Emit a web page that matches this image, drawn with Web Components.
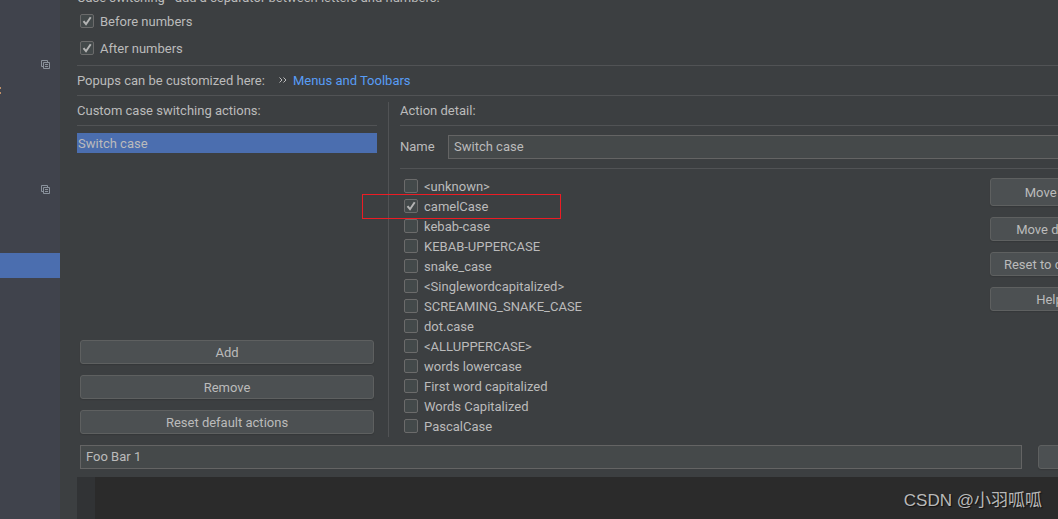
<!DOCTYPE html>
<html lang="en">
<head>
<meta charset="utf-8">
<title>Case switching settings</title>
<style>
html, body { height: 100%; }
body { margin: 0; background: #3c3f41; color: #bbbbbb; font: 13px/20px Roboto, "Noto Sans CJK SC", sans-serif; overflow: hidden; }
</style>
</head>
<body>
<settings-window></settings-window>
<script>
function define(name, html, setup) {
  const template = document.createElement('template');
  template.innerHTML = html;
  customElements.define(name, class extends HTMLElement {
    constructor() {
      super();
      this.attachShadow({ mode: 'open' }).append(template.content.cloneNode(true));
    }
    connectedCallback() {
      if (setup) setup(this, this.shadowRoot);
    }
  });
}

define('nav-row', `
<style>
:host { display: flex; align-items: center; justify-content: space-between; height: 25px; box-sizing: border-box; padding: 0 10px 2px 0; }
:host([selected]) { background: #4b6eaf; }
svg { display: none; }
:host([project]) .copy, :host([mark]) .mark { display: block; }
.copy { margin-left: auto; }
</style>
<svg class="mark" width="2" height="11" fill="#c09068" aria-hidden="true"><path d="M0 3h1v2H0zM0 8h1v2H0z"/></svg>
<svg class="copy" width="9" height="9" viewBox="0 0 9 9" fill="none" stroke="#8a929c" aria-hidden="true"><path d="M2 6.500H.5v-6h6V2M2.500 2.500h6v6h-6zM4 4.500h3M4 6.500h3"/></svg>`);

define('nav-tree', `
<style>:host { display: block; background: #40434c; padding-top: 3px; overflow: hidden; }</style>
<slot></slot>`);

define('check-box', `
<style>
:host { display: flex; align-items: center; height: var(--row, 20px); }
label { display: flex; align-items: center; gap: 6px; white-space: pre; }
input { appearance: none; box-sizing: border-box; width: 14px; height: 14px; margin: 0; border: 1px solid #6b6b6b; border-radius: 2px; background: #43494a; }
.box { display: grid; }
.text { padding-top: 2px; }
input, svg { grid-area: 1 / 1; }
svg { display: none; pointer-events: none; }
input:checked + svg { display: block; z-index: 1; }
</style>
<label><span class="box"><input type="checkbox"><svg width="14" height="14" viewBox="0 0 14 14" fill="none" stroke="#b4b4b4" stroke-width="2" aria-hidden="true"><path d="M3.500 7.200 6 10.200 10.700 3.300"/></svg></span><span class="text"><slot></slot></span></label>`,
(host, root) => { root.querySelector('input').checked = host.hasAttribute('checked'); });

define('push-button', `
<style>
:host { display: block; }
button { display: block; width: 100%; height: var(--height, 24px); box-sizing: border-box; padding: 2px 0 0; border: 1px solid #5e6060; border-radius: 3px; background: #4c5052; color: inherit; font: inherit; box-shadow: 0 1px 1px #35383a; white-space: nowrap; }
</style>
<button type="button"><slot></slot></button>`);

define('text-field', `
<style>
:host { display: block; }
label { display: flex; align-items: center; gap: 12px; }
label span { min-width: 36px; }
label span:empty { display: none; }
input { flex: 1; min-width: 0; height: 24px; box-sizing: border-box; margin: 0; padding: 0 5px 2px; border: 1px solid #646464; border-radius: 0; background: #45494a; color: inherit; font: inherit; outline: 0; }
</style>
<label><span></span><input type="text"></label>`,
(host, root) => {
  const input = root.querySelector('input');
  input.value = host.getAttribute('value');
  if (host.hasAttribute('label')) root.querySelector('span').textContent = host.getAttribute('label');
  else input.setAttribute('aria-label', host.getAttribute('name'));
});

define('rule-line', `<style>:host { display: block; height: 1px; background: #515355; }</style>`);

define('actions-pane', `
<style>
:host { display: flex; flex-direction: column; width: 300px; flex: none; }
header { height: 18px; line-height: 18px; margin-bottom: 5px; }
ul { list-style: none; margin: 7px 0 auto; padding: 0; }
li { background: #4b6eaf; padding-left: 1px; height: 20px; line-height: 22px; }
.buttons { display: grid; gap: 11px; padding: 0 3px 3px; }
</style>
<header>Custom case switching actions:</header>
<rule-line></rule-line>
<ul><li>Switch case</li></ul>
<div class="buttons">
<push-button>Add</push-button>
<push-button>Remove</push-button>
<push-button>Reset default actions</push-button>
</div>`);

define('highlight-frame', `<style>:host { position: absolute; inset: -2px auto auto -42px; width: 199px; height: 25px; box-sizing: border-box; border: 1px solid #ed1c24; pointer-events: none; z-index: 2; }</style>`);

define('detail-pane', `
<style>
:host { display: block; flex: 1; min-width: 0; }
header { height: 18px; line-height: 18px; margin-bottom: 5px; }
text-field { margin: 9px 0; }
.body { display: flex; justify-content: space-between; padding: 7px 3px 0 4px; }
.order { display: grid; align-content: start; gap: 11px; width: 119px; padding-top: 2px; }
.order push-button:first-child { --height: 28px; }
.marked { position: relative; }
</style>
<header>Action detail:</header>
<rule-line></rule-line>
<text-field label="Name" value="Switch case"></text-field>
<rule-line></rule-line>
<div class="body">
<div class="styles">
<check-box>&lt;unknown&gt;</check-box>
<div class="marked"><check-box checked>camelCase</check-box><highlight-frame></highlight-frame></div>
<check-box>kebab-case</check-box>
<check-box>KEBAB-UPPERCASE</check-box>
<check-box>snake_case</check-box>
<check-box>&lt;Singlewordcapitalized&gt;</check-box>
<check-box>SCREAMING_SNAKE_CASE</check-box>
<check-box>dot.case</check-box>
<check-box>&lt;ALLUPPERCASE&gt;</check-box>
<check-box>words lowercase</check-box>
<check-box>First word capitalized</check-box>
<check-box>Words Capitalized</check-box>
<check-box>PascalCase</check-box>
</div>
<div class="order">
<push-button>Move up</push-button>
<push-button>Move down</push-button>
<push-button>Reset to default</push-button>
<push-button>Help</push-button>
</div>
</div>`);

define('preview-editor', `
<style>
:host { display: flex; flex: 1; background: #2b2b2b; }
.gutter { width: 18px; background: #313335; }
</style>
<div class="gutter"></div>`);

define('water-mark', `<style>:host { position: absolute; right: 16px; bottom: 6px; font: 17px/24px "Liberation Sans", "Noto Sans CJK SC", sans-serif; color: #b9b9b9; text-shadow: 1px 1px 1px #111; white-space: nowrap; }</style><slot></slot>`);

define('settings-window', `
<style>
:host { display: grid; grid-template-columns: 60px minmax(0, 1fr); height: 100%; position: relative; overflow: hidden; }
main { display: flex; flex-direction: column; box-sizing: border-box; width: calc(100% + 54px); padding-left: 17px; margin-top: -12px; }
.intro { height: 19px; }
.numbers { --row: 27px; padding: 0 0 4px 3px; }
.popups { display: flex; height: 29px; align-items: center; }
.popups svg { margin: 0 6px 2px 14px; }
a { color: #589df6; text-decoration: none; }
.split { display: flex; gap: 11px; margin-top: 6px; height: 335px; }
.divider { width: 1px; background: #515355; }
.sample { display: flex; gap: 16px; padding: 8px 3px 8px; }
.sample text-field { flex: 1; }
.sample push-button { width: 71px; }
</style>
<nav-tree>
<nav-row></nav-row><nav-row></nav-row><nav-row project></nav-row><nav-row mark></nav-row><nav-row></nav-row>
<nav-row></nav-row><nav-row></nav-row><nav-row project></nav-row><nav-row></nav-row><nav-row></nav-row><nav-row selected></nav-row>
</nav-tree>
<main>
<div class="intro">Case switching - add a separator between letters and numbers:</div>
<div class="numbers">
<check-box checked>Before numbers</check-box>
<check-box checked>After numbers</check-box>
</div>
<rule-line></rule-line>
<div class="popups"><span>Popups can be customized here:</span><svg width="8" height="6" viewBox="0 0 8 6" fill="none" stroke="#bbbbbb" aria-hidden="true"><path d="M.5.500 3 3 .5 5.500M4.500.500 7 3 4.500 5.500"/></svg><a href="#menus">Menus and Toolbars</a></div>
<rule-line></rule-line>
<div class="split">
<actions-pane></actions-pane>
<div class="divider"></div>
<detail-pane></detail-pane>
</div>
<div class="sample"><text-field name="Sample text" value="Foo Bar 1"></text-field><push-button></push-button></div>
<preview-editor></preview-editor>
</main>
<water-mark>CSDN @小羽呱呱</water-mark>`);
</script>
</body>
</html>
